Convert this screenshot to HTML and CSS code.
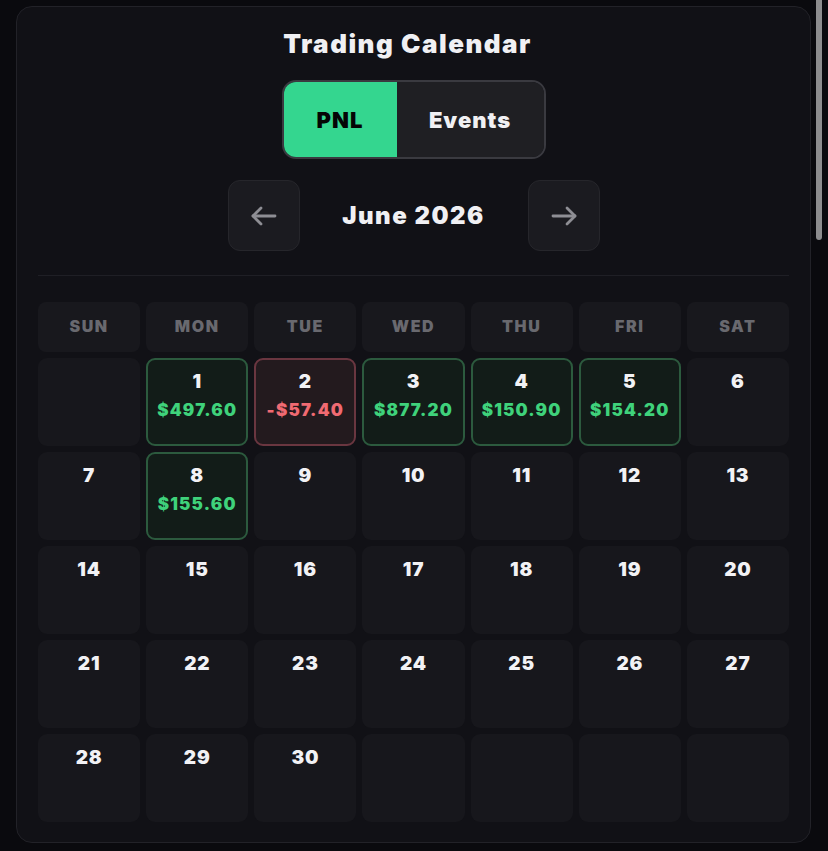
FILE: index.html
```html
<!DOCTYPE html>
<html lang="en">
<head>
<meta charset="utf-8">
<title>Trading Calendar</title>
<link rel="stylesheet" href="styles.css">
</head>
<body>
<div class="scroll-thumb"></div>
<main class="card">
  <h1 class="title">Trading Calendar</h1>
  <div class="toggle">
    <button class="toggle-btn active">PNL</button>
    <button class="toggle-btn">Events</button>
  </div>
  <div class="nav">
    <button class="nav-btn" aria-label="Previous month">
      <svg width="26" height="20" viewBox="0 0 26 20" fill="none" stroke="currentColor" stroke-width="2.8" stroke-linecap="round" stroke-linejoin="round"><path d="M24 10H2"/><path d="M10 2L2 10l8 8"/></svg>
    </button>
    <div class="month">June 2026</div>
    <button class="nav-btn" aria-label="Next month">
      <svg width="26" height="20" viewBox="0 0 26 20" fill="none" stroke="currentColor" stroke-width="2.8" stroke-linecap="round" stroke-linejoin="round"><path d="M2 10h22"/><path d="M16 2l8 8-8 8"/></svg>
    </button>
  </div>
  <div class="divider"></div>
  <div class="grid">
    <div class="dow">Sun</div><div class="dow">Mon</div><div class="dow">Tue</div><div class="dow">Wed</div><div class="dow">Thu</div><div class="dow">Fri</div><div class="dow">Sat</div>

    <div class="day"></div>
    <div class="day win"><span class="num">1</span><span class="amt">$497.60</span></div>
    <div class="day loss"><span class="num">2</span><span class="amt">-$57.40</span></div>
    <div class="day win"><span class="num">3</span><span class="amt">$877.20</span></div>
    <div class="day win"><span class="num">4</span><span class="amt">$150.90</span></div>
    <div class="day win"><span class="num">5</span><span class="amt">$154.20</span></div>
    <div class="day"><span class="num">6</span></div>

    <div class="day"><span class="num">7</span></div>
    <div class="day win"><span class="num">8</span><span class="amt">$155.60</span></div>
    <div class="day"><span class="num">9</span></div>
    <div class="day"><span class="num">10</span></div>
    <div class="day"><span class="num">11</span></div>
    <div class="day"><span class="num">12</span></div>
    <div class="day"><span class="num">13</span></div>

    <div class="day"><span class="num">14</span></div>
    <div class="day"><span class="num">15</span></div>
    <div class="day"><span class="num">16</span></div>
    <div class="day"><span class="num">17</span></div>
    <div class="day"><span class="num">18</span></div>
    <div class="day"><span class="num">19</span></div>
    <div class="day"><span class="num">20</span></div>

    <div class="day"><span class="num">21</span></div>
    <div class="day"><span class="num">22</span></div>
    <div class="day"><span class="num">23</span></div>
    <div class="day"><span class="num">24</span></div>
    <div class="day"><span class="num">25</span></div>
    <div class="day"><span class="num">26</span></div>
    <div class="day"><span class="num">27</span></div>

    <div class="day"><span class="num">28</span></div>
    <div class="day"><span class="num">29</span></div>
    <div class="day"><span class="num">30</span></div>
    <div class="day"></div>
    <div class="day"></div>
    <div class="day"></div>
    <div class="day"></div>
  </div>
</main>
</body>
</html>
```
FILE: styles.css
```css
* { box-sizing: border-box; }

html, body {
  background: #0a0a0e;
}

body {
  margin: 6px 17px 8px 16px;
  font-family: Inter, "Noto Sans", "DejaVu Sans", sans-serif;
  color: #f2f2f5;
  overflow: hidden;
}

.scroll-thumb {
  position: fixed;
  top: 0;
  right: 6px;
  width: 6px;
  height: 240px;
  border-radius: 0 0 3px 3px;
  background: #8c8c8e;
}

.card {
  background: #111116;
  border: 1px solid #222228;
  border-radius: 16px;
  padding: 20px 21px 20px;
  display: flex;
  flex-direction: column;
  align-items: center;
}

.title {
  margin: 0 12px 0 0;
  font-size: 26px;
  line-height: 34px;
  font-weight: 900;
  letter-spacing: 1.5px;
  color: #f0f0f3;
}

.toggle {
  margin-top: 19px;
  display: flex;
  border: 2px solid #3a3a40;
  border-radius: 14px;
  overflow: hidden;
  height: 79px;
}

.toggle-btn {
  border: 0;
  font-family: inherit;
  font-size: 22px;
  font-weight: 900;
  letter-spacing: 1px;
  cursor: pointer;
  background: #1f1f23;
  color: #f0f0f3;
}

.toggle-btn:first-child { width: 113px; }
.toggle-btn:last-child { width: 147px; }

.toggle-btn.active {
  background: #34d68f;
  color: #050505;
}

.nav {
  margin-top: 21px;
  display: flex;
  align-items: center;
  gap: 41px;
}

.nav-btn {
  width: 72px;
  height: 71px;
  border: 1px solid #26262b;
  border-radius: 12px;
  background: #1b1b20;
  color: #8e8e94;
  display: flex;
  align-items: center;
  justify-content: center;
  padding: 0;
  cursor: pointer;
}

.month {
  font-size: 24px;
  font-weight: 900;
  letter-spacing: 1.5px;
  color: #f0f0f3;
  width: 146px;
  text-align: center;
  white-space: nowrap;
}

.divider {
  align-self: stretch;
  height: 1px;
  background: #1f1f25;
  margin-top: 24px;
}

.grid {
  align-self: stretch;
  margin-top: 26px;
  display: grid;
  grid-template-columns: repeat(7, 1fr);
  grid-template-rows: 50px repeat(5, 88px);
  gap: 6px;
}

.dow {
  background: #18181d;
  border-radius: 8px;
  display: flex;
  align-items: center;
  justify-content: center;
  padding-bottom: 2px;
  text-transform: uppercase;
  font-size: 16px;
  font-weight: 900;
  letter-spacing: 1.6px;
  color: #69696f;
}

.day {
  background: #17171c;
  border: 2px solid transparent;
  border-radius: 9px;
  display: flex;
  flex-direction: column;
  align-items: center;
  padding-top: 10px;
}

.num {
  font-size: 19px;
  line-height: 24px;
  font-weight: 900;
  letter-spacing: 0.8px;
  color: #f2f2f5;
}

.amt {
  margin-top: 4px;
  font-size: 17px;
  line-height: 24px;
  font-weight: 900;
  letter-spacing: 1.2px;
}

.day.win {
  background: #121c18;
  border-color: #2c5a3e;
}

.day.win .amt { color: #3fd27b; }

.day.loss {
  background: #231a1e;
  border-color: #6a3640;
}

.day.loss .amt { color: #f06a72; }
```
